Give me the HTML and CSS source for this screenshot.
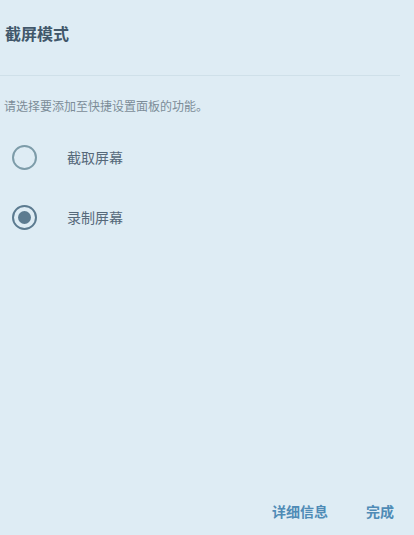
FILE: index.html
```html
<!DOCTYPE html>
<html lang="zh">
<head>
<meta charset="utf-8">
<link rel="stylesheet" href="styles.css">
</head>
<body>
<div class="dialog">
  <div class="title">截屏模式</div>
  <div class="divider"></div>
  <div class="desc">请选择要添加至快捷设置面板的功能。</div>
  <div class="options">
    <div class="option">
      <span class="radio"></span>
      <span class="label">截取屏幕</span>
    </div>
    <div class="option">
      <span class="radio checked"></span>
      <span class="label">录制屏幕</span>
    </div>
  </div>
  <div class="spacer"></div>
  <div class="actions">
    <span class="btn">详细信息</span>
    <span class="btn">完成</span>
  </div>
</div>
</body>
</html>
```
FILE: styles.css
```css
html, body {
  margin: 0;
  padding: 0;
  background: #deecf4;
}
body {
  font-family: "Noto Sans CJK SC", "Noto Sans", sans-serif;
  width: 414px;
  height: 535px;
  overflow: hidden;
}
.dialog {
  display: flex;
  flex-direction: column;
  height: 535px;
}
.title {
  padding: 22px 0 0 5px;
  font-size: 16px;
  font-weight: 700;
  color: #41576a;
  line-height: 22px;
  height: 30px;
}
.divider {
  margin-top: 23px;
  height: 1px;
  width: 400px;
  background: #cfe0e9;
}
.desc {
  margin-top: 21px;
  padding-left: 4px;
  font-size: 12px;
  line-height: 18px;
  color: #7c8c98;
}
.options {
  display: flex;
  flex-direction: column;
  gap: 36px;
  margin-top: 30px;
}
.option {
  display: flex;
  align-items: center;
  height: 24px;
}
.radio {
  box-sizing: border-box;
  width: 25px;
  height: 25px;
  margin-left: 12px;
  border: 2px solid #7d9ca9;
  border-radius: 50%;
  display: flex;
  align-items: center;
  justify-content: center;
}
.radio.checked {
  border-color: #5c7b90;
}
.radio.checked::after {
  content: "";
  width: 13px;
  height: 13px;
  border-radius: 50%;
  background: #5c7b90;
}
.label {
  margin-left: 30px;
  font-size: 14px;
  color: #56697a;
}
.spacer {
  flex: 1;
}
.actions {
  display: flex;
  justify-content: flex-end;
  gap: 38px;
  padding: 0 20px 14px 0;
}
.btn {
  font-size: 14px;
  font-weight: 700;
  color: #4f8bb6;
  line-height: 20px;
}
```
